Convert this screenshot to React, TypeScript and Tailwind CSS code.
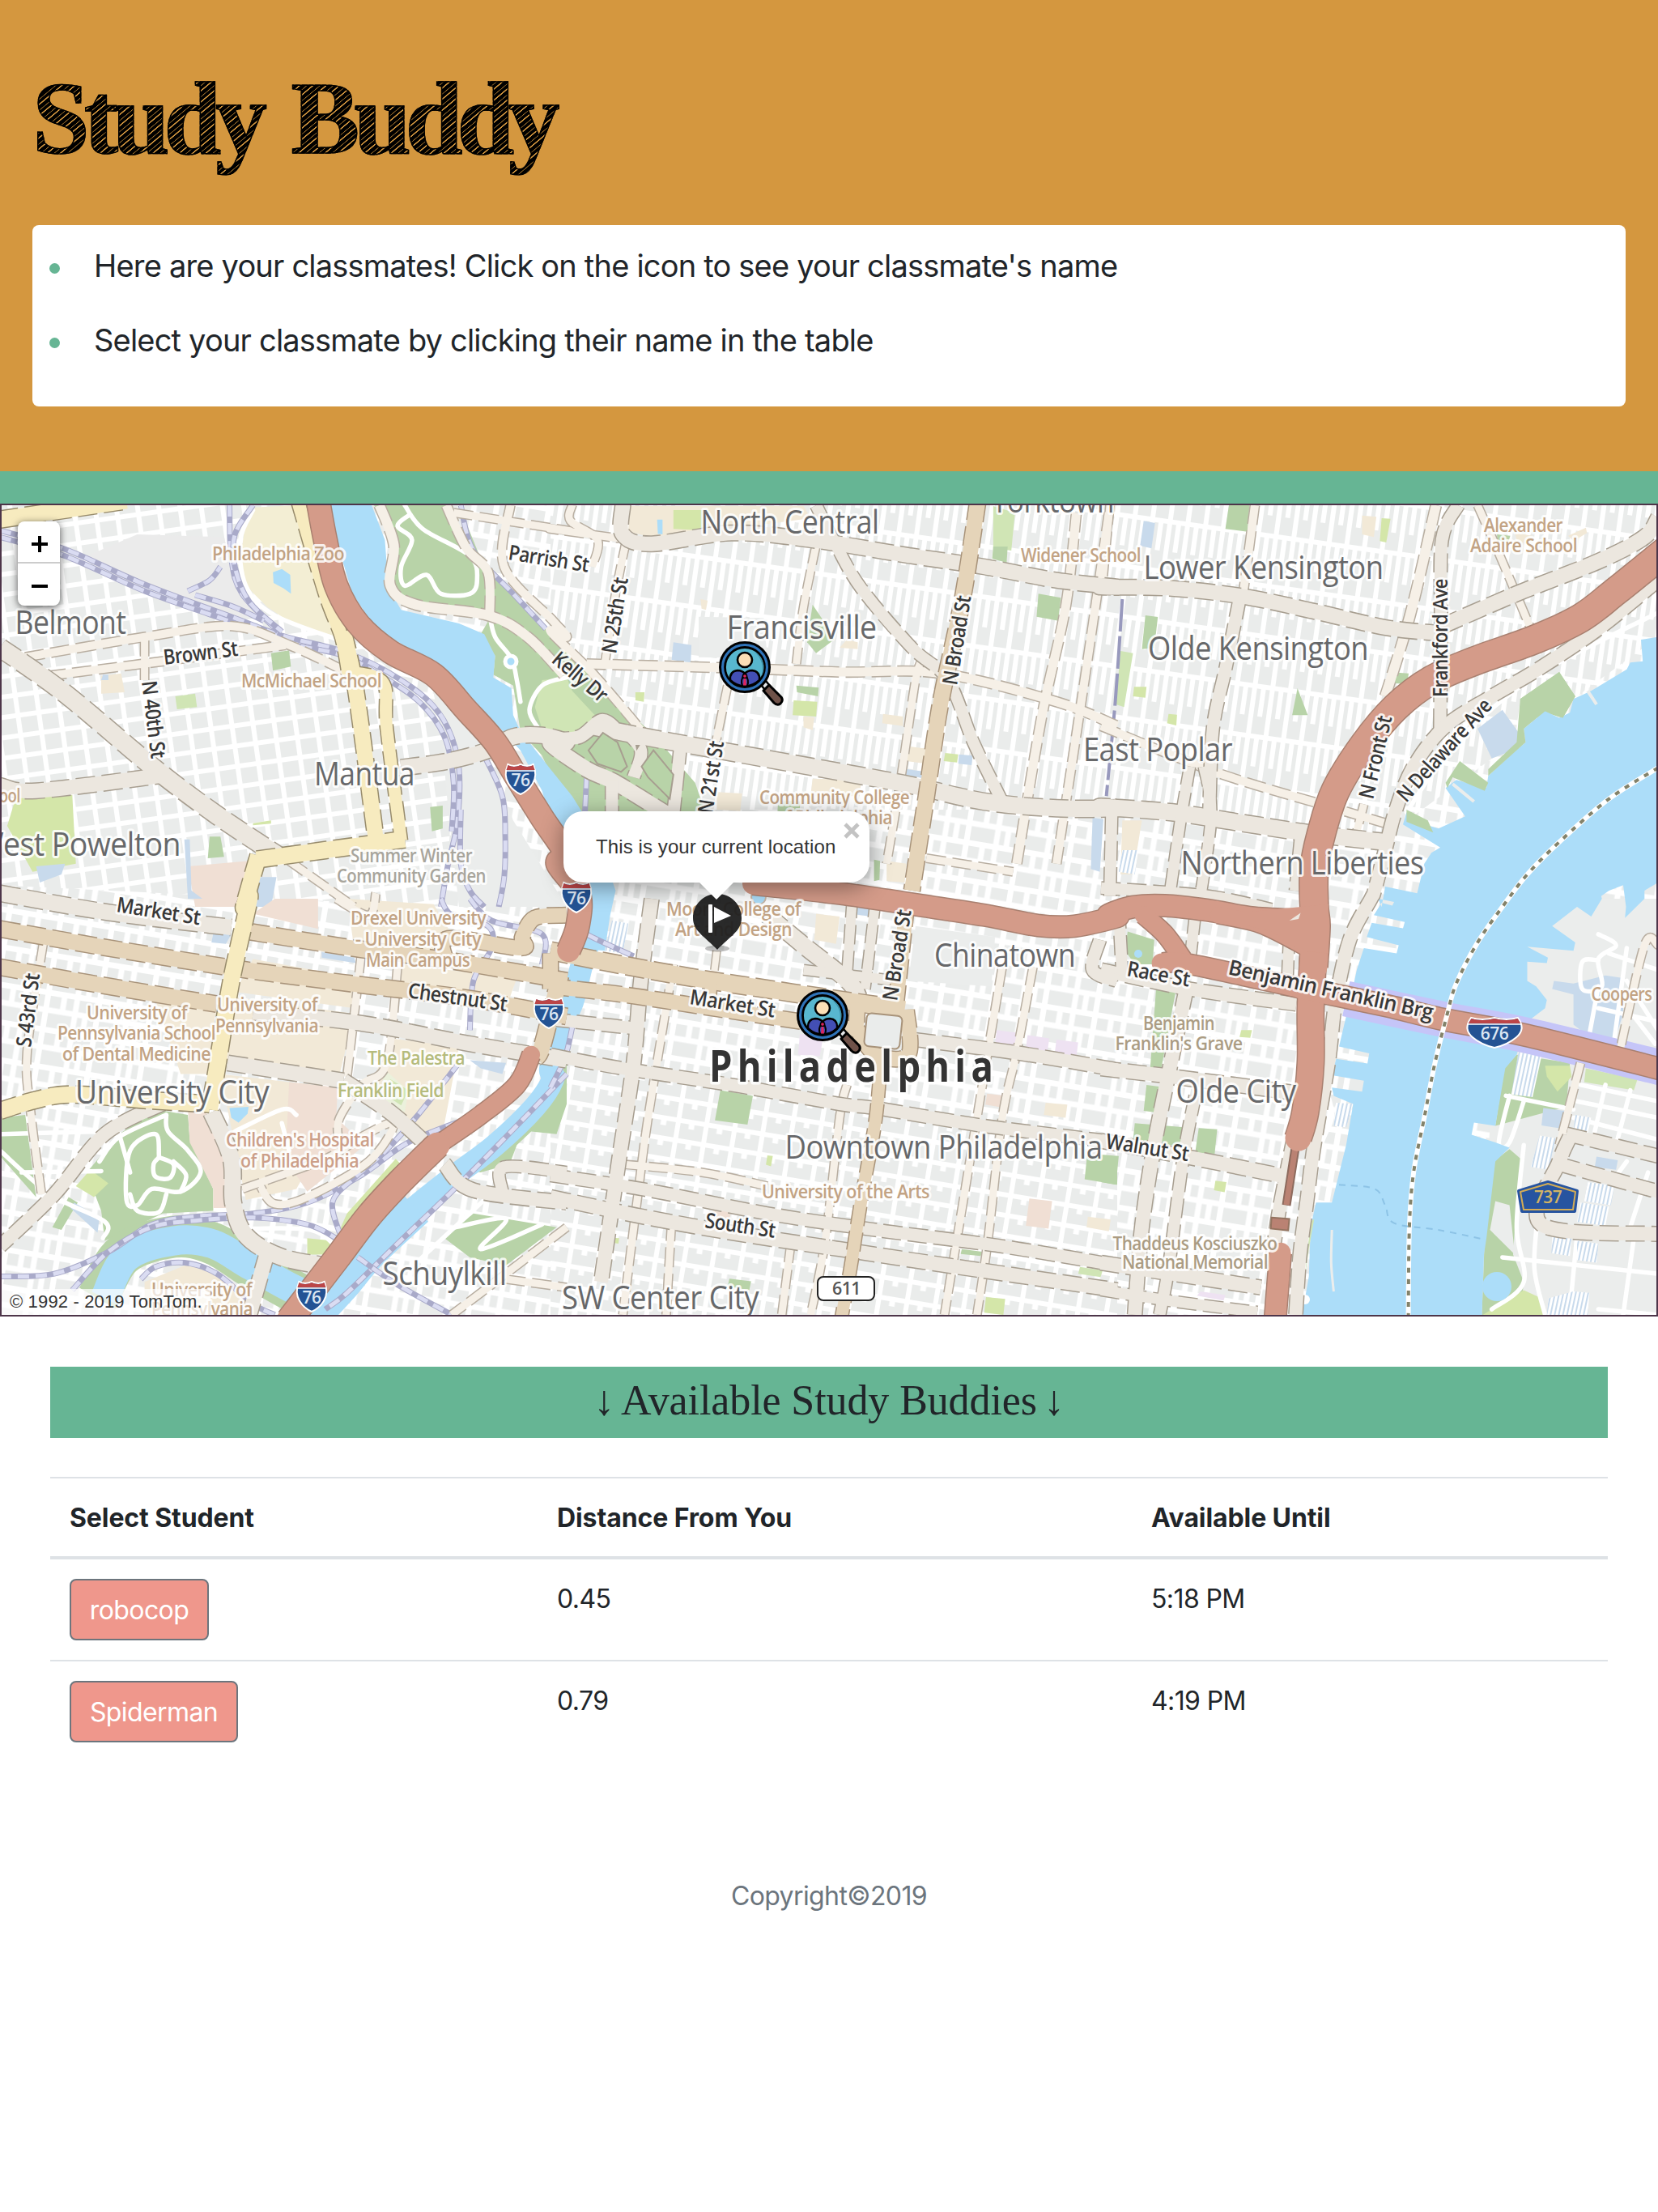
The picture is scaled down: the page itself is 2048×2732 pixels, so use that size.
import React from "react";

/* ------------------------------------------------------------------ */
/* Map geometry: points are surveyed on six sheets and projected here. */
/* ------------------------------------------------------------------ */
const SHEETS: Record<string, [number, number, number, number]> = {
  A: [0, 600, 2.24, 3],
  B: [680, 600, 2.24, 3],
  C: [1360, 600, 2.279, 3],
  D: [0, 1110, 2.24, 2.958],
  E: [680, 1110, 2.24, 2.958],
  F: [1360, 1110, 2.279, 2.958],
};

function project(src: string): [number, number][] {
  let sheet = SHEETS.A;
  const out: [number, number][] = [];
  for (const token of src.trim().split(/\s+/)) {
    if (SHEETS[token]) {
      sheet = SHEETS[token];
    } else {
      const [x, y] = token.split(",").map(Number);
      out.push([sheet[0] + x / sheet[2], sheet[1] + y / sheet[3]]);
    }
  }
  return out;
}

const r = (n: number) => n.toFixed(1);

function poly(src: string) {
  return "M" + project(src).map(([x, y]) => `${r(x)} ${r(y)}`).join("L") + "Z";
}

function curve(src: string) {
  const p = project(src);
  let d = `M${r(p[0][0])} ${r(p[0][1])}`;
  for (let i = 0; i < p.length - 1; i++) {
    const a = p[i - 1] || p[i];
    const b = p[i];
    const c = p[i + 1];
    const e = p[i + 2] || c;
    d += `C${r(b[0] + (c[0] - a[0]) / 6)} ${r(b[1] + (c[1] - a[1]) / 6)} ${r(c[0] - (e[0] - b[0]) / 6)} ${r(c[1] - (e[1] - b[1]) / 6)} ${r(c[0])} ${r(c[1])}`;
  }
  return d;
}

const AREAS: [string, string][] = [
  ["#f3eed4", "A 700,80 820,72 860,200 935,560 820,520 740,450 680,370 665,270 680,130"],
  ["#ebebeb", "A 380,180 620,190 640,300 720,480 640,490 260,310 240,260"],
  ["#ebedec", "A 1180,640 1340,960 1420,1240 1568,1560 1400,1560 1270,1560 1240,1200 1220,900"],
  ["#b8d3a8", "A 1030,60 1230,60 1300,250 1400,420 B 0,560 110,700 290,930 400,1100 430,1215 70,1215 0,1070 A 1500,1000 1440,910 1420,740 1365,700 1370,630 1330,550 1360,480 1150,440 1085,370 1090,200"],
  ["#b8d3a8", "A 1270,72 1330,270 1450,440 1568,620 1568,720 1460,560 1360,430 1290,230"],
  ["#d0e5b5", "A 1500,720 1568,710 B 60,760 130,860 100,920 30,940 0,930 A 1500,900 1480,820"],
  ["#b8d3a8", "D 430,770 520,790 525,880 590,1060 590,1140 450,1150 290,1250 280,1140 240,1000 330,860"],
  ["#b8d3a8", "D 0,800 70,790 100,1090 0,940"],
  ["#b8d3a8", "D 1568,600 1568,750 1540,860 1470,850 1430,900 1410,970 1330,1000 1280,990 1400,870 1500,740"],
  ["#b8d3a8", "D 1310,1150 1540,1200 1400,1340 1300,1310 1230,1240"],
  ["#d4e6a9", "D 250,990 300,1040 260,1090 210,1050"],
  ["#d4e6a9", "D 1095,950 1120,985 970,1190 940,1210 960,1150"],
  ["#d4e6a9", "D 850,1240 920,1250 900,1300 850,1300"],
  ["#b8d3a8", "D 190,1090 215,1110 170,1210 145,1200"],
  ["#d4e6a9", "A 45,1150 200,1145 210,1400 90,1430 20,1260"],
  ["#c8daec", "A 100,1410 180,1400 170,1440 110,1470"],
  ["#b8d3a8", "A 750,620 800,610 805,670 755,685"],
  ["#d0e5b5", "A 485,780 540,770 545,820 490,828"],
  ["#f2e9d7", "A 280,705 335,695 345,765 280,770"],
  ["#c8daec", "A 285,700 300,700 300,720 280,720"],
  ["#b8d3a8", "A 1190,1190 1225,1185 1225,1270 1195,1280"],
  ["#b8d3a8", "A 580,1300 610,1300 620,1375 575,1380"],
  ["#d4e6a9", "A 700,1250 750,1240 750,1252 700,1258"],
  ["#f0dfd4", "A 520,1410 690,1390 665,1560 540,1560"],
  ["#c8daec", "A 510,1310 525,1310 530,1500 560,1530 520,1530"],
  ["#c8daec", "A 720,1450 765,1450 750,1560 700,1560"],
  ["#f0dfd4", "D 700,55 880,110 880,0 760,0"],
  ["#f2e9d7", "D 960,0 1200,20 1250,130 1240,230 980,180"],
  ["#f2e9d7", "D 700,220 990,290 980,400 650,340"],
  ["#f2e9d7", "D 650,360 980,420 940,640 620,590"],
  ["#f2e9d7", "D 430,370 600,400 580,640 500,640"],
  ["#f2e9d7", "D 1110,240 1430,290 1400,400 1100,340"],
  ["#f2e9d7", "D 1080,510 1270,540 1230,820 1180,870 1020,700"],
  ["#ebf1dc", "D 1060,620 1130,700 1120,780 1060,740"],
  ["#d0e5b5", "D 1080,660 1130,700 1110,755 1070,720"],
  ["#f2e9d7", "D 610,640 930,690 920,820 820,1060 680,1100"],
  ["#f0dfd4", "D 520,770 570,780 630,950 625,1130 590,1130 590,1060 525,890"],
  ["#f0dfd4", "D 800,670 935,690 930,800 1010,900 850,1070 790,950"],
  ["#c8daec", "D 205,1110 275,1165 270,1220 195,1130"],
  ["#c8daec", "D 590,125 640,130 625,165 585,160"],
  ["#c8daec", "D 890,195 980,215 985,235 890,215"],
  ["#c8daec", "D 1300,590 1400,600 1390,640 1330,620"],
  ["#f2e9d7", "B 220,75 700,75 720,120 500,160 280,190 215,170"],
  ["#d4e6a9", "B 340,90 440,90 420,165 340,160"],
  ["#acddf9", "B 295,125 310,125 310,180 297,178"],
  ["#c8daec", "B 340,580 390,590 388,655 335,645"],
  ["#ebedec", "B 410,485 590,490 600,640 410,635"],
  ["#b8d3a8", "B 725,440 750,490 785,570 735,620 710,580"],
  ["#f2e9d7", "B 820,570 850,580 850,605 800,600"],
  ["#b8d3a8", "B 680,740 742,748 740,780 682,765"],
  ["#d4e6a9", "B 673,795 738,800 735,855 670,850"],
  ["#f2e9d7", "B 700,855 730,858 725,905 700,895"],
  ["#f2e9d7", "B 415,420 435,425 430,460 418,455"],
  ["#d4e6a9", "B 235,765 260,765 258,800 235,795"],
  ["#f2e9d7", "B 920,845 975,855 975,890 918,880"],
  ["#d0e5b5", "B 1225,75 1285,100 1275,240 1225,230"],
  ["#b8d3a8", "B 1225,225 1265,225 1262,285 1222,270"],
  ["#b8d3a8", "B 1350,400 1412,415 1405,500 1345,485"],
  ["#f2e9d7", "B 990,965 1045,975 1040,1030 985,1020"],
  ["#d4e6a9", "B 1092,990 1128,995 1125,1025 1088,1020"],
  ["#c8daec", "B 1130,995 1168,1000 1165,1035 1128,1030"],
  ["#c8daec", "B 985,1050 1040,1060 1035,1085 983,1070"],
  ["#f2e9d7", "B 725,1085 860,1090 855,1150 720,1150"],
  ["#f2e9d7", "B 460,1135 530,1140 525,1205 460,1200"],
  ["#b8d3a8", "B 630,1165 690,1170 690,1215 628,1205"],
  ["#b8d3a8", "B 895,1385 912,1390 910,1460 895,1465"],
  ["#f2e9d7", "B 930,1390 985,1400 980,1470 930,1465"],
  ["#c8daec", "B 1500,1230 1530,1235 1520,1430 1495,1420"],
  ["#b8d3a8", "C 360,72 418,72 412,170 350,160"],
  ["#d4e6a9", "C 790,120 815,122 803,210 785,205"],
  ["#f2e9d7", "C 735,110 775,115 768,190 735,180"],
  ["#c8daec", "C 120,130 152,138 142,232 110,222"],
  ["#b8d3a8", "C 125,480 160,486 150,600 115,605"],
  ["#d0e5b5", "C 55,612 90,620 65,820 42,810"],
  ["#d4e6a9", "C 93,745 128,745 125,785 90,780"],
  ["#d4e6a9", "C 190,845 214,848 212,888 186,880"],
  ["#b8d3a8", "C 553,750 582,850 538,850"],
  ["#b8d3a8", "C 810,690 866,695 862,735 805,730"],
  ["#f2e9d7", "C 60,1240 115,1240 90,1440 55,1440"],
  ["#f2e9d7", "C 1165,175 1215,185 1195,215 1170,200"],
  ["#b8d3a8", "C 1115,180 1152,185 1145,215 1115,200"],
  ["#f2e9d7", "C 1315,185 1365,155 1368,175 1330,205"],
  ["#b8d3a8", "E 470,700 560,720 545,825 455,810"],
  ["#eee2f2", "E 690,495 755,500 745,575 685,570"],
  ["#eee2f2", "E 1235,480 1295,490 1290,540 1230,530"],
  ["#eee2f2", "E 1320,498 1380,510 1375,558 1315,548"],
  ["#eee2f2", "E 1400,515 1460,525 1455,575 1395,565"],
  ["#ebedec", "E 1010,100 1230,140 1220,320 990,300"],
  ["#f0dfd4", "E 1325,1095 1388,1105 1378,1205 1315,1195"],
  ["#f2e9d7", "E 1487,1162 1550,1172 1545,1215 1483,1200"],
  ["#d4e6a9", "E 1205,1455 1258,1462 1253,1520 1200,1512"],
  ["#b8d3a8", "E 495,1388 555,1398 550,1430 490,1415"],
  ["#b8d3a8", "E 1138,1280 1195,1290 1190,1305 1135,1298"],
  ["#d0e5b5", "E 1465,1345 1528,1358 1522,1382 1460,1370"],
  ["#d4e6a9", "E 600,938 615,940 610,978 596,972"],
  ["#f0dfd4", "E 1208,712 1262,720 1258,765 1203,752"],
  ["#f2e9d7", "E 1370,745 1430,752 1425,800 1365,790"],
  ["#f2e9d7", "E 735,55 800,65 790,165 730,150"],
  ["#c8daec", "E 840,20 890,30 885,65 832,55"],
  ["#f0dfd4", "E 450,1135 500,1140 495,1170 445,1160"],
  ["#d4e6a9", "E 165,1238 190,1240 188,1260 163,1255"],
  ["#b8d3a8", "E 1485,935 1568,950 1568,1045 1478,1025"],
  ["#b8d3a8", "F 0,935 50,940 42,1045 0,1035"],
  ["#b8d3a8", "F 75,120 150,150 145,240 95,240 68,190"],
  ["#b8d3a8", "F 155,330 210,340 168,632 138,625"],
  ["#b8d3a8", "F 128,680 163,686 152,780 120,775"],
  ["#b8d3a8", "F 275,838 327,842 320,932 265,928"],
  ["#b8d3a8", "F 95,820 235,835 225,905 90,885"],
  ["#d4e6a9", "F 322,1030 353,1035 348,1072 318,1065"],
  ["#d4e6a9", "F 395,480 425,480 420,508 390,505"],
  ["#eee2f2", "F 280,1435 350,1448 345,1468 270,1450"],
  ["#b8d3a8", "C 1180,790 1290,690 1335,780 1300,860 1250,840 1190,890"],
  ["#c8daec", "C 1060,900 1130,830 1195,950 1160,980 1100,1010"],
  ["#b8d3a8", "F 1170,570 1320,600 1310,760 1110,830 1135,620"],
  ["#d4e6a9", "F 1250,610 1320,610 1325,650 1285,705 1255,650"],
  ["#d0e5b5", "F 1365,620 1510,660 1500,700 1360,670"],
  ["#b8d3a8", "F 1105,960 1150,915 1190,960 1170,1100 1160,1300 1190,1400 1180,1520 1072,1520 1080,1240"],
  ["#d4e6a9", "F 1100,1500 1190,1430 1240,1460 1250,1520 1075,1520"],
  ["#ebedec", "F 1110,1105 1150,1120 1165,1300 1095,1210"],
  ["#c8daec", "F 1245,765 1305,775 1298,840 1240,828"],
  ["#c8daec", "F 1395,942 1455,955 1450,990 1390,980"],
  ["#c8daec", "F 1420,280 1470,290 1470,420 1440,540 1390,520 1330,460 1330,350 1270,330 1275,300 1330,310"],
];

const DELAWARE =
  "C 1568,560 1520,570 1525,650 1490,655 1480,680 1380,760 1330,790 1320,840 1290,860 1250,835 1190,900 1195,950 1160,990 1090,1075 1085,1120 1000,1090 970,1120 1025,1225 950,1270 900,1250 860,1210 850,1255 955,1340 930,1360 910,1400 890,1510 800,1485 790,1560 F 780,0 825,12 820,25 790,15 768,60 855,85 850,108 762,88 748,140 838,170 832,200 740,180 720,260 710,320 670,540 755,565 750,602 662,585 650,645 740,665 735,705 650,690 655,720 710,750 690,900 650,1110 605,1110 590,1200 585,1380 565,1530 1072,1530 1078,1300 1085,1240 1110,960 1150,910 1110,890 1043,862 1050,818 1110,830 1138,620 1170,570 1200,450 1250,400 1255,370 1225,320 1200,300 1200,230 1255,235 1258,215 1200,175 1330,190 1335,160 1270,100 1340,30 1380,65 1410,0 C 1408,1520 1430,1500 1470,1480 1478,1560 F 1475,70 1530,0 C 1530,1500 1568,1470";

const SCHUYLKILL =
  "A 900,60 935,220 975,400 1040,530 1180,640 1260,720 1350,850 1440,980 1500,1130 B 0,1240 60,1500 E 100,0 70,180 150,190 165,60 B 180,1500 130,1300 60,1150 0,1050 A 1500,1010 1440,910 1420,850 1415,750 1365,710 1370,630 1340,550 1270,510 1110,460 1075,380 1065,200 1025,60";

const RAILS = [
  "A 0,165 180,235 400,365 640,485 780,555 940,610 1060,680 1180,790 1240,900 1270,1050 1265,1250 1240,1400 1220,1560",
  "A 0,190 180,260 400,390 640,505 780,580 940,625 1050,700 1160,800 1230,930 1255,1100 1250,1280",
  "A 635,72 640,270 670,400 770,540",
  "A 700,72 650,180 650,300 690,430 780,540",
  "A 520,390 580,350 610,300",
  "A 540,405 640,445 730,500",
  "A 1340,1000 1390,1150 1398,1300 1395,1450 1380,1560",
  "A 1275,1200 1275,1400 1300,1500 1340,1560",
  "A 1275,72 1310,240 1420,400 1510,530",
  "D 0,1380 150,1370 300,1290 420,1190 550,1160 700,1150 850,1110 1000,1010 1130,890 1300,800",
  "D 200,1430 300,1290 420,1200 550,1175 700,1165 850,1190 930,1240",
  "D 1270,600 1150,800 1060,930 980,1020 920,1110 945,1240",
  "D 1568,640 1400,870 1250,1070 1100,1260 960,1440 900,1500",
  "D 390,1390 430,1345 510,1330 600,1370 700,1480 760,1520",
  "D 990,1310 1100,1410 1250,1520",
  "D 1220,0 1250,60 1350,100 1360,180 1310,300 1300,480",
  "D 1300,0 1360,80 1500,130 1500,240",
  "B 100,1080 95,1215",
  "E 20,60 100,130 230,210",
  "E 60,470 40,580 0,690",
];

type Road = [number, string];
const CREAM: Road[] = [
  [10, "A 70,635 400,560 640,520 800,590 960,690"],
  [10, "A 130,705 450,650 790,590"],
  [9, "A 400,560 400,720"],
  [12, "A 1050,72 1090,220 1080,370 1150,440 1350,480 1460,560 1560,700"],
  [11, "A 1235,72 1290,230 1350,320 1355,480"],
  [9, "A 1255,100 1568,165 B 0,160 190,195"],
  [10, "A 1412,72 1395,300 1530,500 1568,560 B 0,540 120,700 260,920"],
  [9, "B 60,72 55,130 130,200 115,300"],
  [9, "B 210,200 180,400 150,660"],
  [11, "B 100,660 500,675 800,690 1080,695 1400,800 1568,890"],
  [9, "B 735,220 700,450 680,660"],
  [9, "B 1030,640 1010,720 970,1080 930,1400"],
  [9, "B 490,740 450,1000"],
  [11, "B 1455,100 1425,450 1360,850 1290,1400"],
  [10, "B 1545,100 1480,700 1400,1400"],
  [9, "B 1040,1380 1280,1430"],
  [9, "C 25,72 5,350"],
  [10, "C 433,72 400,400"],
  [12, "C 943,72 870,480 800,780"],
  [9, "C 1060,72 1120,250 1210,530"],
  [10, "C 0,890 320,1060 620,1180 800,1250"],
  [9, "C 740,1180 720,1280"],
  [9, "E 340,240 270,800 240,1100 200,1520"],
  [8, "E 460,190 450,300"],
  [9, "E 820,680 800,800 760,1250 720,1520"],
  [9, "E 335,1180 320,1520"],
  [9, "E 665,1260 640,1520"],
  [9, "E 200,970 420,1000 600,1050"],
  [9, "E 1335,250 1290,560 1250,800 1210,1250 1180,1520"],
  [9, "E 1250,250 1210,560 1130,1200 1090,1520"],
  [9, "D 120,160 75,560 85,780 115,1080"],
  [9, "D 1000,200 960,650"],
  [9, "D 1100,250 1070,600 1000,680 940,800 935,870"],
  [9, "D 670,1060 900,950 1000,870 1090,820 1020,960 850,1090 760,1115 720,1050"],
  [9, "D 930,0 1020,60 1040,-20"],
  [9, "D 1568,1200 1380,1390 1250,1520"],
  [9, "D 1400,1390 1568,1420"],
  [9, "A 800,1390 980,1560"],
  [9, "F 1568,170 1530,170 1460,560"],
  [9, "F 1350,600 1290,900"],
];

const BEIGE: Road[] = [
  [22, "A 0,600 180,770 430,1050 600,1220 780,1380"],
  [18, "A 0,1110 100,1130 440,1075"],
  [19, "A 1110,1045 1240,1020 1350,980 1420,930 1500,925 1568,950 B 0,955 100,1050 180,1100 320,1215"],
  [16, "B 0,940 80,930 140,870 180,900"],
  [15, "B 200,900 250,980 230,1080"],
  [15, "B 170,1090 170,1210"],
  [15, "B 360,960 340,1215"],
  [18, "B 200,72 200,180 280,215 500,175 720,200 1000,260 1200,300 1400,350 1568,375 C 0,375 200,380 400,410 600,465 800,525 940,545"],
  [18, "C 960,520 1170,400 1400,280 1530,190 1568,120"],
  [15, "C 1005,72 960,200 957,500 955,900"],
  [15, "C 390,420 350,680 315,900 305,1200"],
  [14, "B 735,72 790,220 860,380 1000,600 1100,720 1170,950 1250,1170"],
  [20, "B 110,890 300,940 550,1000 800,1060 1000,1110 1200,1170 1400,1195 1568,1195 C 0,1190 200,1210 400,1250 600,1290 800,1320"],
  [16, "C 1568,350 1400,530 1230,680 1100,780 970,890 880,1040 830,1200 800,1350 770,1500 F 760,0 700,150 660,380 640,600 600,900 580,1100 560,1300 548,1520"],
  [14, "C 30,1220 25,1520"],
  [13, "C 250,1040 225,1230 195,1500"],
  [13, "C 290,1040 310,1220 280,1520"],
  [14, "C 0,1490 300,1520 480,1570"],
  [12, "C 560,1300 545,1500"],
  [16, "F 0,260 250,330 550,385"],
  [17, "F 0,620 200,650 550,710"],
  [17, "F 240,330 190,640 150,900 115,1200 95,1520"],
  [14, "F 265,720 230,960 190,1350 165,1520"],
  [17, "F 0,885 250,945 520,1015"],
  [17, "F 0,1330 200,1370 450,1420"],
  [13, "F 0,1430 200,1470 440,1510"],
  [16, "F 545,860 500,1150 480,1340"],
  [13, "F 265,60 250,230"],
  [13, "F 530,130 525,280"],
  [14, "F 50,40 60,280"],
  [17, "E 280,0 250,300 230,600 190,950 140,1400"],
  [15, "E 0,440 250,475"],
  [15, "E 0,570 200,620 500,680 800,750 900,765 1200,830 1568,890"],
  [15, "E 0,1010 250,1060 600,1150 900,1210 1250,1270 1568,1340"],
  [17, "E 0,1090 250,1160 500,1220 800,1280 1100,1340 1568,1430"],
  [16, "E 1010,515 1300,565 1568,625"],
  [20, "E 600,60 700,170 830,310 860,400"],
  [12, "E 900,0 870,330"],
  [12, "E 835,0 820,280"],
  [12, "E 960,300 700,260"],
  [15, "E 1520,150 1500,260 1568,300"],
  [19, "D 0,-20 300,50 640,105"],
  [18, "D 700,415 1000,455 1300,530 1568,590"],
  [18, "D 630,600 950,665"],
  [18, "D 950,665 1080,780 1190,910"],
  [17, "D 1230,970 1310,1065 1568,1110"],
  [14, "D 1390,1070 1395,980 1568,1000"],
  [20, "D 585,780 640,950 645,1110 680,1230 780,1310 920,1345"],
  [18, "D 740,1290 690,1520"],
  [16, "D 450,750 290,860 150,1080 0,1270"],
  [17, "F 1320,870 1290,960 1240,1190 1568,1225"],
  [16, "F 1310,860 1568,940"],
  [16, "F 1290,970 1568,1070"],
];

const TAN: Road[] = [
  [19, "B 1182,60 1140,420 1080,800 1040,1150 1000,1500"],
  [18, "E 985,30 955,400"],
  [15, "E 915,560 900,800 860,1100 830,1350 805,1530"],
  [19, "D 0,110 300,180 680,260 1000,315 1300,365 1568,430"],
  [19, "D 0,250 300,320 600,385"],
  [19, "D 690,120 1000,185 1240,225 1568,300"],
  [18, "D 1568,60 1480,70 1445,140 1440,180 1240,145 1235,230"],
  [20, "D 1550,280 1500,540 1480,580"],
  [21, "E 0,190 150,230 400,290 600,330 800,370 980,405"],
  [18, "E 0,320 200,350 400,390 700,450 860,480"],
  [14, "E 445,300 440,390"],
  [18, "E 0,200 0,330"],
  [18, "E 985,405 990,570 900,570 850,480"],
  [18, "E 850,380 845,490"],
];

const YELLOW: Road[] = [
  [20, "A 0,125 350,55"],
  [16, "A 825,60 900,400 945,560 965,700"],
  [19, "A 950,540 985,760 1040,1310"],
  [15, "A 970,690 1060,730 1070,900 1110,1315"],
  [20, "A 1120,1310 900,1350 710,1385"],
  [20, "A 715,1370 675,1560 D 690,0 640,300 600,620 580,770"],
  [20, "D 0,775 100,735 200,715 400,735 580,750"],
];

const MOTORWAY: Road[] = [
  [28, "A 880,55 900,200 930,370 990,510 1080,615 1200,700 1290,830 1370,950 1430,1080 1500,1230 1568,1370 B 20,1400 E 78,-20 75,100 50,190"],
  [22, "D 1470,570 1430,680 1330,790 1210,900"],
  [31, "D 1210,900 1110,1030 1020,1160 940,1300 870,1420 800,1540"],
  [26, "B 560,1475 800,1510 1000,1550 E 1200,60 1350,98 1450,100 1568,65 F 20,60 90,30 180,25 300,42 430,70 580,80"],
  [20, "F 330,60 450,95 580,180"],
  [34, "C 1600,230 1450,390 1350,490 1220,570 1050,650 930,720 830,820 740,960 660,1130 620,1290 600,1420 600,1560 F 605,100 598,250"],
  [32, "F 598,200 590,400 590,600 575,780 555,875"],
  [22, "F 120,60 180,130 230,220"],
  [24, "F 170,235 230,235 400,280 640,350"],
  [26, "F 560,325 800,390 960,440 1200,500 1600,630"],
  [26, "F 505,1295 490,1540"],
];

const WALKS = [
  "A 1120,72 1170,160 1300,260 1320,350 1300,400 1220,400 1180,330 1120,370 1110,300 1140,200 1100,150 1130,110",
  "A 1355,480 1370,560 1415,640 1430,720 1440,800",
  "A 1568,710 1500,740 1465,830 1490,900",
  "D 460,790 465,850 520,920 555,1000 500,1070 420,1060 380,1120 350,1100 360,920 430,860 440,940",
  "D 440,945 480,970 470,1020 430,1015 425,970 440,945",
  "D 480,960 515,1010 500,1070",
  "D 330,860 360,1000",
  "D 275,960 330,870 460,790",
  "D 360,1080 380,1140 440,1145 460,1080",
  "D 1260,1200 1400,1170 1330,1280 1500,1190",
  "A 700,90 665,200 680,370 760,480 935,570",
  "D 0,860 280,850",
  "D 0,920 140,1080 290,1180 285,1240",
  "D 60,1000 280,995",
  "D 650,850 780,770 820,790",
  "D 780,820 800,920",
  "D 700,1205 860,1210 930,1270",
  "D 1160,1320 1340,1100",
  "F 640,720 650,800 620,900 600,1050",
  "F 1140,720 1330,770",
  "F 1150,720 1120,890 1150,890 1190,740",
  "F 1190,900 1170,1200 1190,1400 1100,1500",
  "F 1230,1150 1220,1350 1250,1520",
  "F 1130,1310 1568,1370",
  "F 1400,130 1450,170 1400,220 1410,320 1355,330 1355,230 1400,225",
  "F 1400,320 1370,530",
  "C 1568,470 1230,700 1000,950 860,1210",
];

type Label = [string, number, number, number, number?];
const DISTRICTS: Label[] = [
  ["Yorktown", 1225, 633, 151],
  ["North Central", 865.5, 658.5, 220],
  ["Lower Kensington", 1412.5, 715, 296],
  ["Olde Kensington", 1418, 815, 272],
  ["Francisville", 897.5, 789, 185],
  ["Belmont", 18.5, 783, 137],
  ["Mantua", 388, 970, 124],
  ["West Powelton", -30, 1056.7, 253],
  ["East Poplar", 1338, 940, 184],
  ["Northern Liberties", 1458.5, 1080, 300],
  ["Chinatown", 1154, 1194, 174],
  ["Olde City", 1452.5, 1362, 148],
  ["Downtown Philadelphia", 969.5, 1431, 392],
  ["University City", 93, 1363, 239],
  ["Schuylkill", 472.5, 1587, 153],
  ["SW Center City", 694, 1617, 243],
];

const PLACES: [string, Label[]][] = [
  [
    "#c2a384",
    [
      ["Widener School", 1261, 694, 148],
      ["Philadelphia Zoo", 262, 692, 163],
      ["McMichael School", 298, 849, 173],
      ["Alexander", 1833, 657, 97],
      ["Adaire School", 1816, 682, 132],
      ["Community College", 938, 993, 185],
      ["of Philadelphia", 958, 1018, 144],
      ["Moore College of", 823, 1131, 166],
      ["Art and Design", 834, 1156, 144],
      ["Drexel University", 433, 1142, 167],
      ["- University City", 439, 1167.5, 155],
      ["Main Campus", 452, 1193.5, 128],
      ["University of", 107, 1259, 124],
      ["Pennsylvania School", 71, 1284, 195],
      ["of Dental Medicine", 77, 1310, 183],
      ["University of", 268, 1249, 124],
      ["Pennsylvania", 266, 1275, 127],
      ["University of", 187, 1601, 124],
      ["Pennsylvania", 187, 1625, 125],
      ["University of the Arts", 941, 1479.5, 207],
      ["Coopers", 1965.5, 1236, 75],
      ["School", -31, 991, 56],
    ],
  ],
  [
    "#ab9c83",
    [
      ["Benjamin", 1412, 1271.6, 88],
      ["Franklin's Grave", 1377.5, 1297, 157],
      ["Thaddeus Kosciuszko", 1374.5, 1543.7, 203],
      ["National Memorial", 1386, 1567, 180],
    ],
  ],
  [
    "#a8a59c",
    [
      ["Summer Winter", 433, 1065, 150],
      ["Community Garden", 416, 1090, 184],
    ],
  ],
  [
    "#b5bb7c",
    [
      ["The Palestra", 454, 1314.5, 120],
      ["Franklin Field", 417, 1355, 131],
    ],
  ],
  [
    "#cc9f89",
    [
      ["Children's Hospital", 279, 1416, 183],
      ["of Philadelphia", 297, 1442, 146],
    ],
  ],
];

const STREETS: Label[] = [
  ["Parrish St", 627, 691, 100, 9],
  ["Brown St", 203, 821, 92, -7],
  ["N 40th St", 175, 842, 96, 83],
  ["N 25th St", 761, 808, 94, -81],
  ["Kelly Dr", 680, 817, 80, 40],
  ["N 21st St", 880, 1006, 90, -81],
  ["N Broad St", 1182, 847, 111, -81],
  ["N Broad St", 1108, 1237, 113, -81],
  ["Frankford Ave", 1788, 861, 146, -90],
  ["N Front St", 1696, 988, 104, -77],
  ["N Delaware Ave", 1737, 992, 160, -48],
  ["Market St", 143, 1126, 104, 9],
  ["Chestnut St", 503, 1232, 123, 8],
  ["S 43rd St", 38, 1294, 91, -83],
  ["Market St", 851, 1240, 106, 9],
  ["South St", 870, 1516, 87, 8.5],
  ["Race St", 1391, 1205, 78, 10],
  ["Walnut St", 1365, 1418, 103, 9],
  ["Benjamin Franklin Brg", 1516, 1203, 258, 12.6],
];

function Roads({ list, fill, casing, round }: { list: Road[]; fill: string; casing: string; round?: boolean }) {
  const cap = round ? "round" : "butt";
  return (
    <g fill="none" strokeLinejoin="round" strokeLinecap={cap}>
      {list.map(([w, d], i) => (
        <path key={i} d={curve(d)} stroke={casing} strokeWidth={w + 3} strokeLinecap="butt" strokeDasharray={round ? undefined : "24 8"} />
      ))}
      {list.map(([w, d], i) => (
        <path key={i} d={curve(d)} stroke={fill} strokeWidth={w} />
      ))}
    </g>
  );
}

function Labels({ list, size, color, weight = 400 }: { list: Label[]; size: number; color: string; weight?: number }) {
  return (
    <g
      fontSize={size}
      fontWeight={weight}
      fill={color}
      stroke="#ffffff"
      strokeOpacity={0.85}
      strokeWidth={6}
      strokeLinejoin="round"
      style={{ paintOrder: "stroke" }}
    >
      {list.map(([text, x, y, w, a], i) => (
        <text key={i} x={x} y={y} textLength={w} lengthAdjust="spacingAndGlyphs" transform={a ? `rotate(${a} ${x} ${y})` : undefined}>
          {text}
        </text>
      ))}
    </g>
  );
}

function Interstate({ x, y, w, n }: { x: number; y: number; w: number; n: string }) {
  const h = w / 2;
  return (
    <g transform={`translate(${x} ${y})`}>
      <path
        d={`M${-h * 0.85} -18Q${-h * 0.45} -14 0 -18Q${h * 0.45} -14 ${h * 0.85} -18Q${h * 1.15} -4 ${h * 0.8} 6Q${h * 0.5} 15 0 19Q${-h * 0.5} 15 ${-h * 0.8} 6Q${-h * 1.15} -4 ${-h * 0.85} -18Z`}
        fill="#245394"
        stroke="#fff"
        strokeWidth={2}
      />
      <path d={`M${-h * 0.84} -17Q${-h * 0.45} -13 0 -17Q${h * 0.45} -13 ${h * 0.84} -17L${h * 0.95} -11H${-h * 0.95}Z`} fill="#bb4547" />
      <path d={`M${-h * 0.95} -10H${h * 0.95}`} stroke="#fff" strokeWidth={1.5} />
      <text y={9} textAnchor="middle" fontSize={22} fontWeight={600} fill="#dbe6f3" textLength={n.length * 11.5} lengthAdjust="spacingAndGlyphs">
        {n}
      </text>
    </g>
  );
}

function CityMap() {
  return (
    <svg className="block size-full" viewBox="2 624 2044 1000" preserveAspectRatio="none" fontFamily="'Open Sans', 'Noto Sans', sans-serif">
      <defs>
        <pattern id="blocks" width="35" height="25" patternUnits="userSpaceOnUse" patternTransform="rotate(9.4)">
          <rect width="35" height="25" fill="#eaeceb" />
          <path d="M0 2.5H35M2.5 0V25M20 0V12" stroke="#fff" strokeWidth="7" />
        </pattern>
        <pattern id="rows" width="64" height="46" patternUnits="userSpaceOnUse" patternTransform="rotate(9.4)">
          <rect width="64" height="46" fill="#eaeceb" />
          <path d="M0 3.500H64M0 25H64M3.500 0V46M24 0V25M40 0V46M53 24V46" stroke="#fff" strokeWidth="7" />
        </pattern>
        <pattern id="slats" width="22" height="62" patternUnits="userSpaceOnUse" patternTransform="rotate(8)">
          <rect width="22" height="62" fill="#eaeceb" />
          <path d="M0 3H22M3 0V62M14 0V40" stroke="#fff" strokeWidth="6" />
        </pattern>
        <pattern id="west" width="26" height="25" patternUnits="userSpaceOnUse" patternTransform="rotate(-8)">
          <rect width="26" height="25" fill="#eaeceb" />
          <path d="M0 3H26M3 0V25" stroke="#fff" strokeWidth="6" />
        </pattern>
        <pattern id="parking" width="5" height="5" patternUnits="userSpaceOnUse" patternTransform="rotate(12)">
          <rect width="5" height="5" fill="#fff" />
          <path d="M1 0V5" stroke="#c8daec" strokeWidth="2" />
        </pattern>
      </defs>

      <rect x="0" y="620" width="2048" height="1010" fill="url(#rows)" />
      <path d={poly("B 0,60 1568,60 1568,1200 400,1200 250,900 0,540")} fill="url(#slats)" />
      <path d={poly("C 0,60 1568,60 1568,560 800,1300 0,1200")} fill="url(#slats)" />
      <path d={poly("E 0,600 1568,900 1568,1530 0,1530")} fill="url(#blocks)" />
      <path d={poly("A 0,60 700,60 700,300 1200,800 1260,1000 1230,1560 0,1480")} fill="url(#west)" />
      <path d={poly("F 1150,0 1568,0 1568,1530 1050,1530")} fill="#ebedec" />

      {AREAS.map(([fill, d], i) => (
        <path key={i} d={poly(d)} fill={fill} />
      ))}

      <g fill="none" stroke="#fff" strokeWidth="5.5" strokeLinecap="round" strokeLinejoin="round">
        {WALKS.map((d, i) => (
          <path key={i} d={curve(d)} />
        ))}
        <path d={["F 1350,680 1568,740", "F 1340,740 1568,800", "F 1330,800 1568,880", "F 1420,680 1390,850", "F 1490,700 1450,900", "F 1480,960 1440,1030", "F 1540,1000 1490,1200", "F 1500,1240 1470,1520", "F 1340,1230 1320,1500", "F 1400,1500 1568,1520", "F 1400,400 1568,450", "F 1480,180 1440,560", "F 1430,200 1568,260", "F 1480,300 1568,480", "F 1500,430 1560,530"].map(curve).join("")} />
      </g>

      <g fill="url(#parking)">
        <path d={poly("F 1175,560 1240,575 1215,725 1155,715")} />
        <path d={poly("F 1370,1035 1445,1050 1435,1120 1360,1105")} />
        <path d={poly("F 1350,1110 1430,1125 1420,1195 1340,1180")} />
        <path d={poly("F 1235,865 1280,875 1260,990 1210,980")} />
        <path d={poly("F 1270,1230 1325,1240 1320,1305 1268,1295")} />
        <path d={poly("F 1340,1250 1400,1260 1395,1330 1340,1320")} />
        <path d={poly("F 1330,1435 1375,1440 1370,1520 1255,1520 1260,1460")} />
        <path d={poly("F 1335,790 1380,800 1370,860 1330,850")} />
        <path d={poly("F 660,745 710,750 690,835 655,830")} />
        <path d={poly("C 60,1350 105,1350 95,1440 50,1430")} />
        <path d={poly("E 170,80 215,90 200,200 150,190")} />
      </g>

      {/* water */}
      <g fill="none" strokeLinecap="butt" strokeLinejoin="round">
        <path d={curve("D 270,1460 340,1300 480,1235 590,1260 700,1350 820,1440")} stroke="#b8d3a8" strokeWidth="52" />
        <path d={curve("D 290,1460 350,1310 480,1250 590,1262 700,1345 860,1450 930,1400")} stroke="#acddf9" strokeWidth="36" />
        <path d={curve("E 145,-20 120,100 85,250 60,380 25,480 0,620 D 1530,660 1480,760 1370,900 1250,1020 1120,1160 1010,1320 900,1480 860,1540")} stroke="#acddf9" strokeWidth="28" />
        <path d={curve("D 1150,1130 1020,1290 950,1400 880,1500")} stroke="#acddf9" strokeWidth="46" />
      </g>
      <path d={poly("D 530,1330 600,1370 680,1480 680,1520 400,1520 400,1400")} fill="#f2e9d7" />
      <path d={poly(SCHUYLKILL)} fill="#acddf9" />
      <path d={poly(DELAWARE)} fill="#acddf9" />
      <path d={poly("A 755,320 780,308 803,330 805,400 785,380 757,360")} fill="#acddf9" />
      <path d={poly("D 635,765 688,760 685,785 660,818 640,800")} fill="#acddf9" />
      <circle cx={1849} cy={1589} r={18} fill="#acddf9" />
      <path d={poly("C 1180,790 1290,690 1335,780 1300,860 1250,835 1190,900 1195,950 1090,1075 1090,1050 1170,950")} fill="#b8d3a8" />
      <path d={poly("C 860,1200 920,1240 935,1285 860,1245")} fill="#b8d3a8" />
      <path d={poly("C 1010,1020 1090,1100 1080,1130 990,1080 975,1120 970,1100")} fill="#b8d3a8" />
      <path d={curve("C 990,1105 1050,1170")} stroke="#ebedec" strokeWidth="4" />
      <path d={curve("C 1370,760 1395,810")} stroke="#ebedec" strokeWidth="4" />
      <path d={curve("F 650,1210 648,1330 655,1435")} stroke="#ebedec" strokeWidth="3" fill="none" />
      <path d={poly("F 600,1170 585,1280 572,1400 590,1180")} fill="#d0e5b5" />
      <circle cx={1612} cy={1605} r={6} fill="#fff" />

      {/* railways */}
      <g fill="none">
        {RAILS.map((d, i) => (
          <g key={i}>
            <path d={curve(d)} stroke="#a9aac9" strokeWidth="7" />
            <path d={curve(d)} stroke="#dadcf2" strokeWidth="5" strokeDasharray="14 8" />
          </g>
        ))}
        <path d={curve("C 60,420 40,800 15,1150")} stroke="#9899bd" strokeWidth="4" strokeDasharray="40 6" />
      </g>

      {/* bridge deck */}
      <path d={curve("F 690,365 960,440 1200,500 1600,625")} stroke="#c5c5f8" strokeWidth="44" fill="none" />

      <Roads list={CREAM} fill="#f6f0e7" casing="#b8aea1" />
      <Roads list={BEIGE} fill="#ece7df" casing="#a79e90" />
      <Roads list={TAN} fill="#e5d4b9" casing="#a8937a" />
      <Roads list={YELLOW} fill="#f7ebbf" casing="#978b6c" />

      <path d={poly("B 145,915 185,950 212,1040 195,1060 130,1030 105,980")} fill="#b8d3a8" stroke="#a79e90" strokeWidth="2" />
      <path d={poly("B 285,980 340,1070 330,1160 270,1080 252,1040")} fill="#b8d3a8" stroke="#a79e90" strokeWidth="2" />
      <path d={poly("B 235,960 248,960 238,982")} fill="#a79e90" />
      <rect x={1069} y={1253} width={44} height={41} rx={6} fill="#eaeceb" stroke="#a8937a" strokeWidth="2" transform="rotate(6 1091 1273)" />
      <circle cx={937} cy={1108} r={9} fill="#acddf9" stroke="#c8b8a8" strokeWidth="2" />
      <circle cx={1406} cy={1178} r={5} fill="#acddf9" />
      <circle cx={631} cy={817} r={7} fill="#acddf9" stroke="#fff" strokeWidth="5" />

      <path d={curve("F 548,900 522,1120")} stroke="#8d6b5e" strokeWidth="11" />
      <path d={curve("F 548,902 522,1118")} stroke="#ba8273" strokeWidth="7" />
      <path d={poly("F 480,1165 530,1170 527,1212 478,1205")} fill="#ba8273" stroke="#94735f" strokeWidth="2" />
      <Roads list={MOTORWAY} fill="#d49b89" casing="#a98070" round />
      <path d={poly("F 400,50 640,20 640,200 560,190 480,120 400,95")} fill="#d49b89" />
      <path d={poly("F 530,80 562,52 556,74")} fill="#ece7df" />

      {/* boundary on the river */}
      <g fill="none">
        <path d={curve("C 1568,1045 1430,1160 1290,1320 1200,1440 1130,1560 F 1060,160 1000,310 975,420 940,600 910,800 880,1000 868,1200 865,1530")} stroke="#fff" strokeWidth="6" />
        <path d={curve("C 1568,1045 1430,1160 1290,1320 1200,1440 1130,1560 F 1060,160 1000,310 975,420 940,600 910,800 880,1000 868,1200 865,1530")} stroke="#83826a" strokeWidth="4" strokeDasharray="6 8" />
        <path d={curve("F 670,1045 770,1060 800,1120 825,1185 950,1210 1080,1245")} stroke="#8dc3e6" strokeWidth="2" strokeDasharray="8 7" />
      </g>

      <Interstate x={643} y={962} w={37} n="76" />
      <Interstate x={712} y={1108} w={37} n="76" />
      <Interstate x={678} y={1251} w={37} n="76" />
      <Interstate x={385} y={1601} w={37} n="76" />
      <Interstate x={1846} y={1275} w={68} n="676" />
      <g>
        <path d="M1912 1460L1948 1471L1945 1496H1880L1876 1471Z" fill="#2654a0" stroke="#2654a0" strokeWidth="4" strokeLinejoin="round" />
        <path d="M1912 1462L1946 1472L1943 1494H1882L1878 1472Z" fill="#2654a0" stroke="#d3ac55" strokeWidth="2" strokeLinejoin="round" />
        <text x={1912} y={1486} textAnchor="middle" fontSize={22} fontWeight={600} fill="#d3b464" textLength="34" lengthAdjust="spacingAndGlyphs">737</text>
        <rect x={1010} y={1577} width={70} height={29} rx={7} fill="#fff" stroke="#222" strokeWidth="2" />
        <text x={1045.5} y={1599} textAnchor="middle" fontSize={22} fontWeight={600} fill="#555" textLength="35" lengthAdjust="spacingAndGlyphs">611</text>
      </g>

      {PLACES.map(([color, list], i) => (
        <Labels key={i} list={list} size={23} color={color} weight={600} />
      ))}
      <Labels list={DISTRICTS} size={40} color="#67686a" weight={500} />
      <Labels list={STREETS} size={26} color="#383838" weight={600} />
      <text
        transform="translate(876 1336) scale(0.84 1)"
        fontSize={54}
        fontWeight={700}
        fill="#333"
        stroke="#fff"
        strokeOpacity={0.85}
        strokeWidth={7}
        strokeLinejoin="round"
        textLength={417}
        lengthAdjust="spacing"
        style={{ paintOrder: "stroke" }}
      >
        Philadelphia
      </text>
    </svg>
  );
}

function BuddyPin({ className }: { className: string }) {
  return (
    <svg className={`absolute size-20 ${className}`} viewBox="0 0 80 80">
      <path d="M52 54L58 49L63 55L57 60Z" fill="#e4e6e8" stroke="#000" strokeWidth="2.5" />
      <path d="M55 61L62 54L77 69Q80 73 76 77Q72 80 68 76Z" fill="#6f5249" stroke="#000" strokeWidth="3" strokeLinejoin="round" />
      <circle cx="32" cy="32" r="30.5" fill="#2f73b8" stroke="#000" strokeWidth="3" />
      <circle cx="32" cy="32" r="24.5" fill="#58b7cf" stroke="#000" strokeWidth="2.8" />
      <path d="M44 13Q58 26 52 44Q56 38 55.500 30Q54 18 44 13Z" fill="#3e92ab" />
      <path d="M14 48Q13 37 23 36Q29 36 32 40Q35 36 41 36Q51 37 50 48Q42 55.500 32 55.500Q22 55.500 14 48Z" fill="#434fb5" stroke="#000" strokeWidth="2.5" strokeLinejoin="round" />
      <path d="M32 40Q26 48 29 55M32 40Q38 48 35 55" fill="none" stroke="#000" strokeWidth="2" />
      <circle cx="32" cy="43" r="2.600" fill="#e0245e" stroke="#000" strokeWidth="1.500" />
      <path d="M30.800 46H33.200L34 54.500H30Z" fill="#e0245e" />
      <circle cx="32" cy="23" r="9" fill="#fbdfb6" stroke="#000" strokeWidth="2.600" />
    </svg>
  );
}

const BUDDIES = [
  { name: "robocop", width: "w-[172px]", distance: "0.45", until: "5:18 PM" },
  { name: "Spiderman", width: "w-[208px]", distance: "0.79", until: "4:19 PM" },
];

export default function App() {
  return (
    <div className="min-h-[2732px] w-[2048px] overflow-hidden bg-white font-['Inter',sans-serif] text-[32px] leading-[48px] tracking-[-0.6px] text-[#212529]">
      <header className="h-[582px] bg-[#d4973f] px-10 pt-[76px]">
        <h1 className="mb-[62px] h-[140px] w-fit whitespace-nowrap bg-[repeating-linear-gradient(140deg,#000_0px,#000_3px,#d4973f_3.500px,#d4973f_4.500px,#000_5px,#000_9px,#b27d31_9.500px,#000_10.500px)] bg-clip-text pr-4 font-['Liberation_Serif',serif] text-[127px] font-bold leading-[140px] tracking-[-7px] text-transparent [-webkit-text-stroke:1.5px_black] [word-spacing:12px]">
          Study Buddy
        </h1>
        <ul className="flex h-[224px] flex-col gap-8 rounded-lg bg-white pl-[21px] pt-5 text-[38px] leading-[60px] tracking-[-0.8px]">
          <li className="flex items-center">
            <span className="mr-[42px] mt-1.5 size-[13px] rounded-full bg-[#66b594]" />
            <span className="whitespace-nowrap">Here are your classmates! Click on the icon to see your classmate's name</span>
          </li>
          <li className="flex items-center">
            <span className="mr-[42px] mt-1.5 size-[13px] rounded-full bg-[#66b594]" />
            <span className="whitespace-nowrap">Select your classmate by clicking their name in the table</span>
          </li>
        </ul>
      </header>
      <div className="h-10 bg-[#66b594]" />

      <section className="relative h-[1004px] overflow-hidden border-2 border-[#4d3549] font-['Liberation_Sans',sans-serif]">
        <CityMap />
        <div className="absolute left-5 top-5 flex h-[104px] w-[52px] flex-col rounded-lg bg-white shadow-[0_2px_10px_rgba(0,0,0,0.65)]">
          <button className="flex h-[52px] items-center justify-center border-b-2 border-[#ccc] pl-0.5 pt-1.5">
            <svg className="size-5" viewBox="0 0 20 20"><path d="M0 10H20M10 0V20" stroke="#000" strokeWidth="4" /></svg>
          </button>
          <button className="flex h-[52px] items-center justify-center pl-0.5 pt-1">
            <svg className="size-5" viewBox="0 0 20 20"><path d="M0 10H20" stroke="#000" strokeWidth="4" /></svg>
          </button>
        </div>

        <BuddyPin className="left-[886px] top-[168px]" />
        <BuddyPin className="left-[982px] top-[598px]" />

        <svg className="absolute left-[852px] top-[476px] h-[78px] w-[64px]" viewBox="0 0 64 78">
          <ellipse cx="32" cy="71.500" rx="15" ry="4" fill="#000" opacity="0.25" />
          <path d="M32 4C49 4 62 17 62 34C62 50 47 57 32 73C17 57 2 50 2 34C2 17 15 4 32 4Z" fill="#1f1f1f" opacity="0.95" />
          <rect x="21" y="17" width="5" height="35" rx="1" fill="#fff" />
          <path d="M28 20L49 31L28 40Z" fill="#fff" />
        </svg>

        <div className="absolute left-[694px] top-[378px] flex h-[88px] w-[378px] items-center rounded-3xl bg-white pl-10 shadow-[0_6px_28px_rgba(0,0,0,0.4)]">
          <span className="whitespace-nowrap text-2xl tracking-[0.1px] text-[#333]">This is your current location</span>
          <svg className="absolute right-3 top-3.5 size-5" viewBox="0 0 20 20"><path d="M2 2L18 18M18 2L2 18" stroke="#c3c3c3" strokeWidth="4.600" /></svg>
          <svg className="absolute left-[167px] top-[87px] h-[23px] w-[44px]" viewBox="0 0 44 23"><path d="M0 0H44L22 22Z" fill="#fff" /></svg>
        </div>

        <div className="absolute bottom-0 left-0 flex h-8 w-[258px] items-center whitespace-nowrap bg-white/70 pl-2.5 text-[22px] tracking-[0.15px] text-[#333]">
          © 1992 - 2019 TomTom.
        </div>
      </section>

      <main className="px-[62px] pt-[62px]">
        <h2 className="flex h-[88px] items-center justify-center gap-2 whitespace-nowrap bg-[#66b594] pb-1 font-['Liberation_Serif',serif] text-[52px] tracking-[-0.1px]">
          <span>↓</span>
          <span>Available Study Buddies</span>
          <span>↓</span>
        </h2>
        <table className="mt-12 w-[1924px] table-fixed border-separate border-spacing-0 text-left">
          <thead>
            <tr className="[&>th]:border-b-4 [&>th]:border-t-2 [&>th]:border-[#dee2e6] [&>th]:px-6 [&>th]:pb-[23px] [&>th]:pt-[25px] [&>th]:font-bold [&>th]:tracking-[-0.1px]">
              <th className="w-[602px]">Select Student</th>
              <th className="w-[734px]">Distance From You</th>
              <th>Available Until</th>
            </tr>
          </thead>
          <tbody>
            {BUDDIES.map((b) => (
              <tr key={b.name} className="align-top [&:not(:first-child)>td]:border-t-2 [&>td]:border-[#dee2e6] [&>td]:px-6">
                <td className="py-6">
                  <button className={`flex h-[76px] items-center justify-center rounded-lg border-2 border-[#6c757d] bg-[#ef978c] pt-0.5 text-white ${b.width}`}>
                    {b.name}
                  </button>
                </td>
                <td className="pt-[25px]">{b.distance}</td>
                <td className="pt-[25px]">{b.until}</td>
              </tr>
            ))}
          </tbody>
        </table>
      </main>
      <footer className="mt-[142px] text-center text-[#6c757d]">Copyright©2019</footer>
    </div>
  );
}
